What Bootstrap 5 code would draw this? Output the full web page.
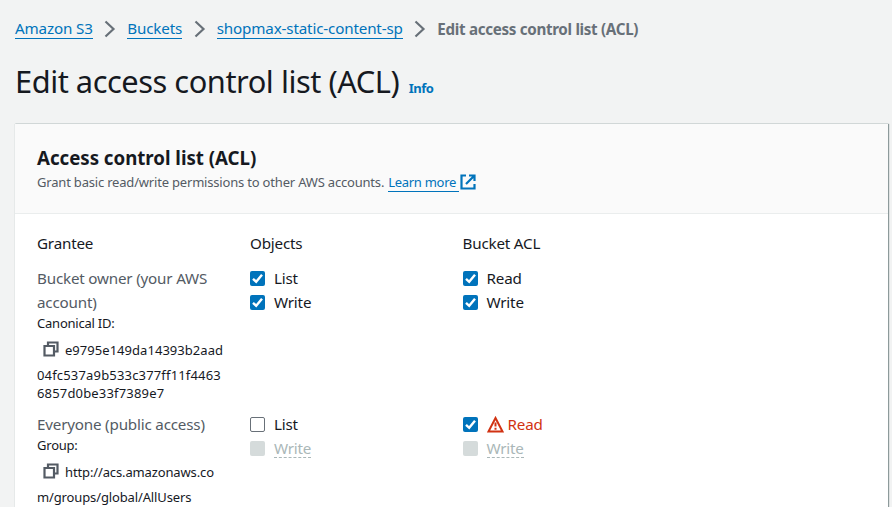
<!DOCTYPE html>
<html lang="en">
<head>
<meta charset="utf-8">
<meta name="viewport" content="width=device-width, initial-scale=1">
<title>Edit access control list (ACL)</title>
<link href="https://cdn.jsdelivr.net/npm/bootstrap@5.3.0/dist/css/bootstrap.min.css" rel="stylesheet">
<style>
body{background:#f2f3f3;color:#16191f;font:15.2px/24px "Noto Sans","Open Sans",sans-serif;letter-spacing:-.19px;overflow:hidden;height:507px}
a{color:#0073bb;text-decoration:none}
.lk{border-bottom:1px solid #0073bb;line-height:19px;display:inline-block}
.crumbs{height:24px;padding:0 0 0 15px;margin-top:17px}
.crumbs .lk{letter-spacing:-.16px}
.crumbs svg{flex:none;margin:0 8px 0 7.6px}
.current{color:#687078;font-weight:700;letter-spacing:-.32px}
.title{font-size:30.8px;line-height:40px;font-weight:400;margin:0;letter-spacing:-.46px}
.heading{margin:20px 0 0 15px;height:41px}
.info{font-size:13px;font-weight:700;letter-spacing:-.5px;margin-left:9.5px}
.panel{margin:22px 0 0 15px;width:873px;height:383px;border-radius:0;border:0;background:#fff;box-shadow:0 0 1px #aab7b8,1px 0 1px #879596,0 -1px 0 #eaeded}
.panel-head{background:#fafafa;height:90px;border-bottom:1px solid #eaeded;padding:22px 22px 0}
.panel-head h2{font-size:18.7px;line-height:24px;font-weight:700;margin:0;letter-spacing:-.02px}
.desc{font-size:13px;line-height:24px;color:#545b64;letter-spacing:-.19px}
.desc .lk{line-height:17px;letter-spacing:-.28px;margin-left:4px;padding-right:3px}
.desc svg{margin-left:1px;align-self:center}
.grid-body{padding:17px 22px 0;overflow:hidden;flex:1}
.col-names{margin-bottom:11px}
.c1{width:213px;flex:none}
.c2{width:212.5px;flex:none}
.grantee{margin-bottom:10px}
.muted{color:#545b64}
.sm{font-size:13px;line-height:18px;letter-spacing:-.22px}
.copyline{height:34px;padding:2px 0 0 6px}
.copyline svg{margin:0 6px 3px 0;flex:none}
.hex{letter-spacing:.04px}
.hex-rest{letter-spacing:.17px}
.url{letter-spacing:-.13px}
.box{width:15px;height:15px;flex:none;border-radius:2px;margin-right:9px}
.on{background:#0073bb}
.off{border:1px solid #687078;background:#fff}
.dis{background:#d5dbdb}
.box svg{display:block}
.opt{height:24px}
.distext{color:#aab7b8;border-bottom:1px dashed #aab7b8;line-height:18px;height:19px;letter-spacing:-.22px}
.warn{color:#d13212}
.warn svg{margin-right:4px}
</style>
</head>
<body>
<svg class="d-none">
<symbol id="chev" viewBox="0 0 19 18"><path d="M5.500 1.500l8 7.500-8 7.500" fill="none" stroke="#687078" stroke-width="2.200"/></symbol>
<symbol id="copy" viewBox="0 0 16 16"><g fill="none" stroke="#545b64" stroke-width="2.200"><path d="M5 5V1.500h9.500v9H11"/><path d="M1.500 5H11v9.500H1.500z"/></g></symbol>
<symbol id="tick" viewBox="0 0 15 15"><path d="M3 7.800l3.200 3L12 3.800" fill="none" stroke="#fff" stroke-width="2.400"/></symbol>
</svg>
<nav class="crumbs d-flex align-items-center text-nowrap">
<a href="#" class="lk">Amazon S3</a><svg width="19" height="18"><use href="#chev"/></svg>
<a href="#" class="lk">Buckets</a><svg width="19" height="18"><use href="#chev"/></svg>
<a href="#" class="lk">shopmax-static-content-sp</a><svg width="19" height="18"><use href="#chev"/></svg>
<span class="current">Edit access control list (ACL)</span>
</nav>
<header class="heading d-flex align-items-baseline text-nowrap"><h1 class="title">Edit access control list (ACL)</h1><a href="#" class="info">Info</a></header>
<main class="card panel">
<div class="panel-head">
<h2>Access control list (ACL)</h2>
<div class="desc d-flex align-items-baseline text-nowrap"><span>Grant basic read/write permissions to other AWS accounts.</span><a href="#" class="lk">Learn more</a><svg width="16" height="16" viewBox="0 0 16 16" fill="none" stroke="#0073bb" stroke-width="2.200"><path d="M6 1.500H1.500v13h13V10M9 1.500h5.500V7M14.500 1.500L6 10"/></svg></div>
</div>
<div class="grid-body">
<div class="col-names d-flex"><div class="c1">Grantee</div><div class="c2">Objects</div><div>Bucket ACL</div></div>
<div class="grantee d-flex">
<div class="c1 text-nowrap">
<div class="muted">Bucket owner (your AWS<br>account)</div>
<div class="sm">Canonical ID:</div>
<div class="sm copyline d-flex align-items-center hex"><svg width="16" height="16"><use href="#copy"/></svg>e9795e149da14393b2aad</div>
<div class="sm hex-rest">04fc537a9b533c377ff11f4463<br>6857d0be33f7389e7</div>
</div>
<div class="c2">
<div class="opt d-flex align-items-center"><span class="box on"><svg width="15" height="15"><use href="#tick"/></svg></span>List</div>
<div class="opt d-flex align-items-center"><span class="box on"><svg width="15" height="15"><use href="#tick"/></svg></span>Write</div>
</div>
<div>
<div class="opt d-flex align-items-center"><span class="box on"><svg width="15" height="15"><use href="#tick"/></svg></span>Read</div>
<div class="opt d-flex align-items-center"><span class="box on"><svg width="15" height="15"><use href="#tick"/></svg></span>Write</div>
</div>
</div>
<div class="grantee d-flex">
<div class="c1 text-nowrap">
<div class="muted">Everyone (public access)</div>
<div class="sm">Group:</div>
<div class="sm copyline d-flex align-items-center url"><svg width="16" height="16"><use href="#copy"/></svg>http://acs.amazonaws.co</div>
<div class="sm url">m/groups/global/AllUsers</div>
</div>
<div class="c2">
<div class="opt d-flex align-items-center"><span class="box off"></span>List</div>
<div class="opt d-flex align-items-center"><span class="box dis"></span><span class="distext">Write</span></div>
</div>
<div>
<div class="opt d-flex align-items-center"><span class="box on"><svg width="15" height="15"><use href="#tick"/></svg></span><span class="warn d-flex align-items-center"><svg width="17" height="17" viewBox="0 0 17 17" fill="none" stroke="#d13212" stroke-width="2"><path d="M8.500 2L15.500 15.500h-14z"/><path d="M8.500 6.500v4M8.500 11.800v2"/></svg>Read</span></div>
<div class="opt d-flex align-items-center"><span class="box dis"></span><span class="distext">Write</span></div>
</div>
</div>
</div>
</main>
<script src="https://cdn.jsdelivr.net/npm/bootstrap@5.3.0/dist/js/bootstrap.bundle.min.js"></script>
</body>
</html>
